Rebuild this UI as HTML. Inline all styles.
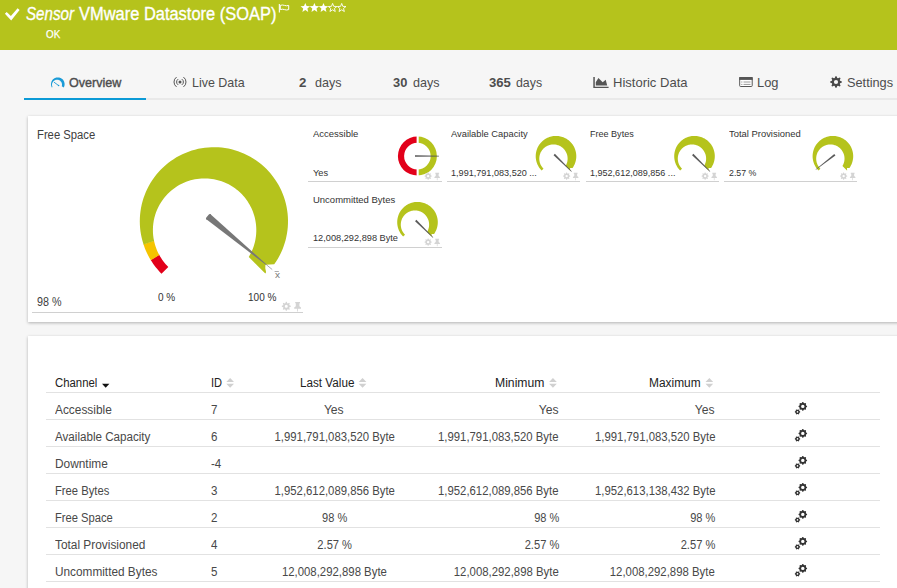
<!DOCTYPE html>
<html><head><meta charset="utf-8"><title>Sensor VMware Datastore (SOAP)</title>
<style>
*{box-sizing:border-box;margin:0;padding:0}
html,body{width:897px;height:588px;overflow:hidden;background:#f6f6f6;font-family:"Liberation Sans",sans-serif;color:#444}
.t{position:absolute;white-space:nowrap;line-height:1;display:block}
#hdr{position:absolute;left:0;top:0;width:897px;height:50px;background:#b5c31c}
#tabline{position:absolute;left:24px;top:98px;width:873px;height:2px;background:#e9e9e9}
#tabsel{position:absolute;left:24px;top:97.5px;width:122px;height:2.5px;background:#0c9ad6}
.card{position:absolute;background:#fff;box-shadow:0 1px 3px rgba(0,0,0,.28)}
.ln{position:absolute;left:46px;width:834px;height:1px;background:#e2e2e2}
.ul{position:absolute;height:1px;background:#d0d0d0}
svg.ov{position:absolute;left:0;top:0}
</style></head><body>
<div id="hdr"></div>
<div id="tabline"></div><div id="tabsel"></div>
<div class="card" style="left:28px;top:116px;width:880px;height:206px"></div>
<div class="card" style="left:28px;top:336px;width:880px;height:270px"></div>
<div class="ln" style="top:392px"></div><div class="ln" style="top:419px"></div><div class="ln" style="top:446px"></div><div class="ln" style="top:473px"></div><div class="ln" style="top:500px"></div><div class="ln" style="top:527px"></div><div class="ln" style="top:554px"></div><div class="ln" style="top:581px"></div>
<div class="ul" style="left:32.0px;top:312px;width:271.0px"></div><div class="ul" style="left:308.0px;top:181px;width:134.0px"></div><div class="ul" style="left:447.0px;top:181px;width:133.0px"></div><div class="ul" style="left:586.0px;top:181px;width:132.5px"></div><div class="ul" style="left:724.0px;top:181px;width:133.0px"></div><div class="ul" style="left:308.0px;top:247px;width:134.0px"></div>
<svg class="ov" width="897" height="588" viewBox="0 0 897 588">
<path fill="#fff" d="M4.9 13.8 L6.7 12 L10.9 16.1 L17.6 8.3 L19.6 10 L11.2 20.4 Z"/><rect x="278.8" y="4" width="1.1" height="8.5" fill="#fff"/><path fill="none" stroke="#fff" stroke-width="1" d="M280.3 5.4 Q282.5 4.6 284.5 5.4 T288.7 5.4 V9.6 Q286.6 10.4 284.5 9.6 T280.3 9.6 Z"/><path fill="#fff" d="M305.30 2.90 L306.59 6.12 L310.06 6.35 L307.39 8.58 L308.24 11.95 L305.30 10.10 L302.36 11.95 L303.21 8.58 L300.54 6.35 L304.01 6.12 Z"/><path fill="#fff" d="M314.40 2.90 L315.69 6.12 L319.16 6.35 L316.49 8.58 L317.34 11.95 L314.40 10.10 L311.46 11.95 L312.31 8.58 L309.64 6.35 L313.11 6.12 Z"/><path fill="#fff" d="M323.50 2.90 L324.79 6.12 L328.26 6.35 L325.59 8.58 L326.44 11.95 L323.50 10.10 L320.56 11.95 L321.41 8.58 L318.74 6.35 L322.21 6.12 Z"/><path fill="none" stroke="#fff" stroke-width="0.9" d="M332.60 3.40 L333.72 6.36 L336.88 6.51 L334.41 8.49 L335.25 11.54 L332.60 9.80 L329.95 11.54 L330.79 8.49 L328.32 6.51 L331.48 6.36 Z"/><path fill="none" stroke="#fff" stroke-width="0.9" d="M341.70 3.40 L342.82 6.36 L345.98 6.51 L343.51 8.49 L344.35 11.54 L341.70 9.80 L339.05 11.54 L339.89 8.49 L337.42 6.51 L340.58 6.36 Z"/><path fill="#1a9bd7" d="M51.80 87.39 L51.50 86.76 L51.27 86.10 L51.11 85.42 L51.02 84.72 L51.00 84.02 L51.06 83.32 L51.18 82.64 L51.38 81.96 L51.64 81.32 L51.97 80.70 L52.36 80.12 L52.81 79.58 L53.31 79.09 L53.86 78.66 L54.45 78.28 L55.08 77.97 L55.73 77.72 L56.41 77.54 L57.10 77.44 L57.80 77.40 L58.50 77.44 L59.19 77.54 L59.87 77.72 L60.52 77.97 L61.15 78.28 L61.74 78.66 L62.29 79.09 L62.79 79.58 L63.24 80.12 L63.63 80.70 L63.96 81.32 L64.22 81.96 L64.42 82.64 L64.54 83.32 L64.60 84.02 L64.58 84.72 L64.49 85.42 L64.33 86.10 L64.10 86.76 L63.80 87.39 L61.74 86.29 L61.87 85.85 L61.95 85.41 L61.99 84.96 L62.00 84.52 L61.96 84.09 L61.89 83.67 L61.79 83.26 L61.65 82.86 L61.48 82.48 L61.28 82.11 L61.05 81.76 L60.79 81.43 L60.50 81.13 L60.18 80.85 L59.84 80.59 L59.48 80.36 L59.09 80.16 L58.68 79.99 L58.25 79.86 L57.80 79.76 L57.34 79.71 L56.86 79.70 L56.38 79.74 L55.89 79.83 L55.40 79.96 L54.92 80.15 L54.46 80.39 L54.01 80.69 L53.59 81.04 L53.21 81.44 L52.87 81.89 L52.57 82.38 L52.33 82.91 L52.15 83.47 L52.04 84.05 L52.00 84.65 L52.03 85.25 L52.13 85.85 L52.31 86.43 L52.55 86.99 Z"/><path d="M53.9 82.1 L58.8 85.7" stroke="#1a9bd7" stroke-width="0.9" fill="none"/><circle cx="58.6" cy="85.5" r="0.8" fill="#1a9bd7"/><circle cx="180" cy="82" r="1.5" fill="#555"/><path fill="none" stroke="#555" stroke-width="1" d="M178.23 79.10 A3.40 3.40 0 0 0 178.23 84.90 M181.77 79.10 A3.40 3.40 0 0 1 181.77 84.90"/><path fill="none" stroke="#555" stroke-width="1" d="M176.54 77.10 A6.00 6.00 0 0 0 176.54 86.90 M183.46 77.10 A6.00 6.00 0 0 1 183.46 86.90"/><path fill="#555" d="M593.3 77 h1.5 v9.8 h13.8 v1.1 h-15.3 Z"/><path fill="#555" d="M595.8 85.6 V82.3 L598.4 77.9 L602.7 82.3 L605.7 79.8 L607.2 85.6 Z"/><rect x="739.7" y="77.5" width="12.5" height="9" rx="0.8" fill="#fff" stroke="#555" stroke-width="1"/><rect x="739.2" y="77" width="13.5" height="2.9" fill="#555"/><path stroke="#9a9a9a" stroke-width="1" d="M743.5 82 h7 M743.5 84.4 h7 M741.2 82 h1.2 M741.2 84.4 h1.2"/><path fill-rule="evenodd" fill="#484848" d="M841.87 81.42 L841.87 82.58 L840.11 83.25 L839.79 84.03 L840.56 85.74 L839.74 86.56 L838.03 85.79 L837.25 86.11 L836.58 87.87 L835.42 87.87 L834.75 86.11 L833.97 85.79 L832.26 86.56 L831.44 85.74 L832.21 84.03 L831.89 83.25 L830.13 82.58 L830.13 81.42 L831.89 80.75 L832.21 79.97 L831.44 78.26 L832.26 77.44 L833.97 78.21 L834.75 77.89 L835.42 76.13 L836.58 76.13 L837.25 77.89 L838.03 78.21 L839.74 77.44 L840.56 78.26 L839.79 79.97 L840.11 80.75 Z M833.90 82.00 a2.10 2.10 0 1 0 4.20 0 a2.10 2.10 0 1 0 -4.20 0 Z"/>
<path fill="#e2001a" d="M161.50 273.70 L159.98 272.13 L158.51 270.52 L157.08 268.87 L155.71 267.17 L154.38 265.44 L153.11 263.67 L151.89 261.86 L150.72 260.02 L159.19 254.82 L160.13 256.47 L161.13 258.08 L162.18 259.66 L163.29 261.19 L164.46 262.69 L165.69 264.14 L166.96 265.55 L168.29 266.91 Z"/><path fill="#f5c400" d="M150.92 260.35 L149.78 258.43 L148.69 256.49 L147.66 254.51 L146.69 252.50 L145.78 250.46 L144.93 248.40 L144.15 246.31 L143.43 244.20 L154.01 240.76 L154.44 242.62 L154.94 244.47 L155.50 246.30 L156.14 248.11 L156.84 249.90 L157.61 251.67 L158.45 253.41 L159.36 255.12 Z"/><path fill="#b5c31c" d="M143.55 244.57 L142.57 241.35 L141.73 238.10 L141.04 234.81 L140.50 231.50 L140.12 228.16 L139.88 224.81 L139.80 221.45 L139.87 218.09 L140.09 214.74 L140.46 211.40 L140.99 208.08 L141.66 204.79 L142.49 201.53 L143.45 198.32 L144.57 195.15 L145.82 192.03 L147.22 188.98 L148.75 185.99 L150.42 183.07 L152.22 180.23 L154.15 177.48 L156.19 174.82 L158.36 172.25 L160.64 169.78 L163.03 167.42 L165.52 165.17 L168.12 163.04 L170.80 161.02 L173.58 159.13 L176.44 157.37 L179.38 155.73 L182.38 154.24 L185.46 152.88 L188.59 151.66 L191.77 150.58 L195.00 149.65 L198.26 148.87 L201.56 148.23 L204.89 147.75 L208.23 147.42 L211.58 147.24 L214.94 147.21 L218.30 147.33 L221.65 147.61 L224.98 148.03 L228.29 148.61 L231.57 149.34 L234.81 150.21 L238.01 151.23 L241.16 152.40 L244.26 153.70 L247.29 155.15 L250.26 156.73 L253.15 158.45 L255.95 160.29 L258.68 162.26 L261.31 164.35 L263.84 166.56 L266.27 168.87 L268.59 171.30 L270.80 173.83 L272.89 176.46 L274.87 179.18 L276.71 181.99 L278.43 184.87 L280.01 187.84 L281.46 190.87 L282.77 193.96 L283.94 197.11 L284.96 200.31 L285.84 203.55 L286.57 206.83 L287.15 210.14 L287.59 213.47 L287.86 216.82 L287.99 220.18 L287.97 223.54 L287.79 226.89 L287.46 230.23 L286.98 233.56 L286.35 236.86 L285.57 240.13 L284.64 243.35 L283.57 246.54 L282.35 249.67 L281.00 252.74 L279.50 255.75 L277.87 258.69 L276.11 261.55 L274.23 264.33 L265.39 264.63 L265.29 268.30 L266.10 272.36 L265.31 273.55 L248.79 256.93 L250.00 254.84 L251.10 252.71 L252.08 250.56 L252.95 248.40 L253.72 246.23 L254.38 244.05 L254.94 241.88 L255.40 239.71 L255.76 237.55 L256.03 235.40 L256.20 233.26 L256.29 231.15 L256.29 229.06 L256.21 226.99 L256.04 224.95 L255.80 222.94 L255.48 220.96 L255.10 219.01 L254.64 217.10 L254.11 215.22 L253.52 213.38 L252.86 211.57 L252.15 209.80 L251.37 208.07 L250.54 206.39 L249.65 204.74 L248.70 203.13 L247.71 201.56 L246.66 200.04 L245.56 198.55 L244.41 197.11 L243.21 195.72 L241.96 194.36 L240.66 193.06 L239.32 191.80 L237.93 190.58 L236.50 189.42 L235.02 188.30 L233.50 187.23 L231.93 186.22 L230.32 185.25 L228.67 184.35 L226.97 183.49 L225.23 182.70 L223.45 181.96 L221.63 181.29 L219.78 180.68 L217.88 180.14 L215.94 179.66 L213.97 179.26 L211.97 178.93 L209.93 178.68 L207.86 178.51 L205.77 178.42 L203.64 178.41 L201.50 178.50 L199.33 178.67 L197.15 178.94 L194.95 179.31 L192.75 179.78 L190.54 180.35 L188.33 181.03 L186.12 181.82 L183.93 182.72 L181.75 183.73 L179.60 184.85 L177.48 186.09 L175.39 187.45 L173.35 188.92 L171.36 190.51 L169.43 192.21 L167.57 194.03 L165.78 195.96 L164.07 198.00 L162.46 200.15 L160.95 202.40 L159.54 204.75 L158.25 207.20 L157.08 209.73 L156.05 212.34 L155.15 215.03 L154.39 217.79 L153.78 220.60 L153.33 223.46 L153.04 226.36 L152.91 229.29 L152.94 232.23 L153.15 235.19 L153.53 238.14 L154.08 241.08 Z"/><path d="M206.02 219.06 L266.15 264.98 L266.60 264.44 L210.22 213.98 Z" fill="#777"/><line x1="207.31" y1="218.44" x2="209.86" y2="215.36" stroke="#777" stroke-width="2.60" stroke-linecap="round"/><line x1="266.37" y1="264.71" x2="272.23" y2="269.55" stroke="#888" stroke-width="0.7"/><path fill="#b5c31c" d="M541.65 170.55 L540.94 169.81 L540.27 169.03 L539.64 168.22 L539.06 167.38 L538.51 166.51 L538.02 165.62 L537.56 164.70 L537.16 163.75 L536.80 162.79 L536.49 161.81 L536.23 160.82 L536.03 159.82 L535.87 158.80 L535.76 157.78 L535.71 156.76 L535.71 155.74 L535.75 154.71 L535.86 153.69 L536.01 152.68 L536.21 151.67 L536.47 150.68 L536.77 149.70 L537.12 148.74 L537.52 147.79 L537.97 146.87 L538.47 145.97 L539.00 145.10 L539.59 144.26 L540.21 143.44 L540.87 142.66 L541.58 141.91 L542.32 141.20 L543.09 140.53 L543.90 139.90 L544.74 139.31 L545.61 138.76 L546.50 138.26 L547.42 137.80 L548.36 137.39 L549.32 137.03 L550.29 136.72 L551.28 136.46 L552.29 136.24 L553.30 136.08 L554.32 135.97 L555.34 135.91 L556.37 135.90 L557.39 135.95 L558.41 136.04 L559.43 136.19 L560.43 136.39 L561.43 136.64 L562.41 136.94 L563.37 137.29 L564.32 137.68 L565.24 138.13 L566.14 138.62 L567.02 139.15 L567.87 139.73 L568.68 140.35 L569.47 141.01 L570.22 141.71 L570.93 142.45 L571.61 143.22 L572.24 144.02 L572.84 144.86 L573.39 145.72 L573.89 146.61 L574.36 147.53 L574.77 148.47 L575.14 149.43 L575.45 150.40 L575.72 151.39 L575.94 152.39 L576.11 153.40 L576.22 154.42 L576.29 155.45 L576.30 156.47 L576.26 157.50 L576.17 158.52 L576.02 159.53 L575.83 160.54 L575.59 161.54 L575.29 162.52 L574.95 163.48 L574.56 164.43 L574.12 165.36 L573.63 166.26 L573.10 167.14 L572.53 167.99 L570.10 168.07 L570.08 169.08 L570.30 170.19 L570.08 170.51 L565.56 165.96 L565.92 165.32 L566.25 164.68 L566.54 164.02 L566.79 163.36 L567.01 162.70 L567.19 162.04 L567.34 161.38 L567.46 160.72 L567.54 160.07 L567.59 159.42 L567.61 158.78 L567.61 158.15 L567.57 157.52 L567.51 156.91 L567.43 156.30 L567.31 155.70 L567.18 155.12 L567.02 154.55 L566.84 153.99 L566.64 153.44 L566.42 152.91 L566.17 152.39 L565.91 151.88 L565.63 151.38 L565.33 150.90 L565.02 150.44 L564.69 149.99 L564.34 149.55 L563.97 149.13 L563.59 148.72 L563.19 148.33 L562.77 147.95 L562.34 147.59 L561.90 147.24 L561.44 146.92 L560.97 146.61 L560.48 146.31 L559.97 146.04 L559.45 145.78 L558.92 145.55 L558.38 145.33 L557.82 145.14 L557.24 144.97 L556.66 144.82 L556.06 144.69 L555.45 144.59 L554.83 144.52 L554.20 144.47 L553.56 144.45 L552.91 144.46 L552.26 144.50 L551.59 144.57 L550.93 144.68 L550.26 144.81 L549.59 144.99 L548.91 145.19 L548.25 145.44 L547.58 145.72 L546.92 146.04 L546.27 146.40 L545.63 146.80 L545.01 147.24 L544.40 147.72 L543.81 148.23 L543.25 148.79 L542.71 149.38 L542.20 150.01 L541.72 150.68 L541.28 151.38 L540.87 152.11 L540.50 152.87 L540.18 153.66 L539.91 154.48 L539.68 155.31 L539.50 156.17 L539.38 157.04 L539.31 157.93 L539.29 158.82 L539.33 159.72 L539.43 160.62 L539.59 161.51 L539.80 162.40 L540.08 163.27 L540.41 164.13 L540.79 164.97 L541.24 165.78 L541.73 166.56 L542.27 167.31 L542.87 168.02 L543.51 168.69 Z"/><path d="M553.55 155.13 L571.37 171.66 L571.72 171.30 L554.88 153.77 Z" fill="#5a5a5a"/><path fill="#b5c31c" d="M680.15 170.55 L679.44 169.81 L678.77 169.03 L678.14 168.22 L677.56 167.38 L677.01 166.51 L676.52 165.62 L676.06 164.70 L675.66 163.75 L675.30 162.79 L674.99 161.81 L674.73 160.82 L674.53 159.82 L674.37 158.80 L674.26 157.78 L674.21 156.76 L674.21 155.74 L674.25 154.71 L674.36 153.69 L674.51 152.68 L674.71 151.67 L674.97 150.68 L675.27 149.70 L675.62 148.74 L676.02 147.79 L676.47 146.87 L676.97 145.97 L677.50 145.10 L678.09 144.26 L678.71 143.44 L679.37 142.66 L680.08 141.91 L680.82 141.20 L681.59 140.53 L682.40 139.90 L683.24 139.31 L684.11 138.76 L685.00 138.26 L685.92 137.80 L686.86 137.39 L687.82 137.03 L688.79 136.72 L689.78 136.46 L690.79 136.24 L691.80 136.08 L692.82 135.97 L693.84 135.91 L694.87 135.90 L695.89 135.95 L696.91 136.04 L697.93 136.19 L698.93 136.39 L699.93 136.64 L700.91 136.94 L701.87 137.29 L702.82 137.68 L703.74 138.13 L704.64 138.62 L705.52 139.15 L706.37 139.73 L707.18 140.35 L707.97 141.01 L708.72 141.71 L709.43 142.45 L710.11 143.22 L710.74 144.02 L711.34 144.86 L711.89 145.72 L712.39 146.61 L712.86 147.53 L713.27 148.47 L713.64 149.43 L713.95 150.40 L714.22 151.39 L714.44 152.39 L714.61 153.40 L714.72 154.42 L714.79 155.45 L714.80 156.47 L714.76 157.50 L714.67 158.52 L714.52 159.53 L714.33 160.54 L714.09 161.54 L713.79 162.52 L713.45 163.48 L713.06 164.43 L712.62 165.36 L712.13 166.26 L711.60 167.14 L711.03 167.99 L708.60 168.07 L708.58 169.08 L708.80 170.19 L708.58 170.51 L704.06 165.96 L704.42 165.32 L704.75 164.68 L705.04 164.02 L705.29 163.36 L705.51 162.70 L705.69 162.04 L705.84 161.38 L705.96 160.72 L706.04 160.07 L706.09 159.42 L706.11 158.78 L706.11 158.15 L706.07 157.52 L706.01 156.91 L705.93 156.30 L705.81 155.70 L705.68 155.12 L705.52 154.55 L705.34 153.99 L705.14 153.44 L704.92 152.91 L704.67 152.39 L704.41 151.88 L704.13 151.38 L703.83 150.90 L703.52 150.44 L703.19 149.99 L702.84 149.55 L702.47 149.13 L702.09 148.72 L701.69 148.33 L701.27 147.95 L700.84 147.59 L700.40 147.24 L699.94 146.92 L699.47 146.61 L698.98 146.31 L698.47 146.04 L697.95 145.78 L697.42 145.55 L696.88 145.33 L696.32 145.14 L695.74 144.97 L695.16 144.82 L694.56 144.69 L693.95 144.59 L693.33 144.52 L692.70 144.47 L692.06 144.45 L691.41 144.46 L690.76 144.50 L690.09 144.57 L689.43 144.68 L688.76 144.81 L688.09 144.99 L687.41 145.19 L686.75 145.44 L686.08 145.72 L685.42 146.04 L684.77 146.40 L684.13 146.80 L683.51 147.24 L682.90 147.72 L682.31 148.23 L681.75 148.79 L681.21 149.38 L680.70 150.01 L680.22 150.68 L679.78 151.38 L679.37 152.11 L679.00 152.87 L678.68 153.66 L678.41 154.48 L678.18 155.31 L678.00 156.17 L677.88 157.04 L677.81 157.93 L677.79 158.82 L677.83 159.72 L677.93 160.62 L678.09 161.51 L678.30 162.40 L678.58 163.27 L678.91 164.13 L679.29 164.97 L679.74 165.78 L680.23 166.56 L680.77 167.31 L681.37 168.02 L682.01 168.69 Z"/><path d="M692.05 155.13 L709.87 171.66 L710.22 171.30 L693.38 153.77 Z" fill="#5a5a5a"/><path fill="#b5c31c" d="M818.55 170.55 L817.84 169.81 L817.17 169.03 L816.54 168.22 L815.96 167.38 L815.41 166.51 L814.92 165.62 L814.46 164.70 L814.06 163.75 L813.70 162.79 L813.39 161.81 L813.13 160.82 L812.93 159.82 L812.77 158.80 L812.66 157.78 L812.61 156.76 L812.61 155.74 L812.65 154.71 L812.76 153.69 L812.91 152.68 L813.11 151.67 L813.37 150.68 L813.67 149.70 L814.02 148.74 L814.42 147.79 L814.87 146.87 L815.37 145.97 L815.90 145.10 L816.49 144.26 L817.11 143.44 L817.77 142.66 L818.48 141.91 L819.22 141.20 L819.99 140.53 L820.80 139.90 L821.64 139.31 L822.51 138.76 L823.40 138.26 L824.32 137.80 L825.26 137.39 L826.22 137.03 L827.19 136.72 L828.18 136.46 L829.19 136.24 L830.20 136.08 L831.22 135.97 L832.24 135.91 L833.27 135.90 L834.29 135.95 L835.31 136.04 L836.33 136.19 L837.33 136.39 L838.33 136.64 L839.31 136.94 L840.27 137.29 L841.22 137.68 L842.14 138.13 L843.04 138.62 L843.92 139.15 L844.77 139.73 L845.58 140.35 L846.37 141.01 L847.12 141.71 L847.83 142.45 L848.51 143.22 L849.14 144.02 L849.74 144.86 L850.29 145.72 L850.79 146.61 L851.26 147.53 L851.67 148.47 L852.04 149.43 L852.35 150.40 L852.62 151.39 L852.84 152.39 L853.01 153.40 L853.12 154.42 L853.19 155.45 L853.20 156.47 L853.16 157.50 L853.07 158.52 L852.92 159.53 L852.73 160.54 L852.49 161.54 L852.19 162.52 L851.85 163.48 L851.46 164.43 L851.02 165.36 L850.53 166.26 L850.00 167.14 L849.43 167.99 L847.00 168.07 L846.98 169.08 L847.20 170.19 L846.98 170.51 L842.46 165.96 L842.82 165.32 L843.15 164.68 L843.44 164.02 L843.69 163.36 L843.91 162.70 L844.09 162.04 L844.24 161.38 L844.36 160.72 L844.44 160.07 L844.49 159.42 L844.51 158.78 L844.51 158.15 L844.47 157.52 L844.41 156.91 L844.33 156.30 L844.21 155.70 L844.08 155.12 L843.92 154.55 L843.74 153.99 L843.54 153.44 L843.32 152.91 L843.07 152.39 L842.81 151.88 L842.53 151.38 L842.23 150.90 L841.92 150.44 L841.59 149.99 L841.24 149.55 L840.87 149.13 L840.49 148.72 L840.09 148.33 L839.67 147.95 L839.24 147.59 L838.80 147.24 L838.34 146.92 L837.87 146.61 L837.38 146.31 L836.87 146.04 L836.35 145.78 L835.82 145.55 L835.28 145.33 L834.72 145.14 L834.14 144.97 L833.56 144.82 L832.96 144.69 L832.35 144.59 L831.73 144.52 L831.10 144.47 L830.46 144.45 L829.81 144.46 L829.16 144.50 L828.49 144.57 L827.83 144.68 L827.16 144.81 L826.49 144.99 L825.81 145.19 L825.15 145.44 L824.48 145.72 L823.82 146.04 L823.17 146.40 L822.53 146.80 L821.91 147.24 L821.30 147.72 L820.71 148.23 L820.15 148.79 L819.61 149.38 L819.10 150.01 L818.62 150.68 L818.18 151.38 L817.77 152.11 L817.40 152.87 L817.08 153.66 L816.81 154.48 L816.58 155.31 L816.40 156.17 L816.28 157.04 L816.21 157.93 L816.19 158.82 L816.23 159.72 L816.33 160.62 L816.49 161.51 L816.70 162.40 L816.98 163.27 L817.31 164.13 L817.69 164.97 L818.14 165.78 L818.63 166.56 L819.17 167.31 L819.77 168.02 L820.41 168.69 Z"/><path d="M834.28 153.91 L815.58 169.44 L815.89 169.84 L835.45 155.41 Z" fill="#5a5a5a"/><path fill="#b5c31c" d="M403.15 236.55 L402.44 235.81 L401.77 235.03 L401.14 234.22 L400.56 233.38 L400.01 232.51 L399.52 231.62 L399.06 230.70 L398.66 229.75 L398.30 228.79 L397.99 227.81 L397.73 226.82 L397.53 225.82 L397.37 224.80 L397.26 223.78 L397.21 222.76 L397.21 221.74 L397.25 220.71 L397.36 219.69 L397.51 218.68 L397.71 217.67 L397.97 216.68 L398.27 215.70 L398.62 214.74 L399.02 213.79 L399.47 212.87 L399.97 211.97 L400.50 211.10 L401.09 210.26 L401.71 209.44 L402.37 208.66 L403.08 207.91 L403.82 207.20 L404.59 206.53 L405.40 205.90 L406.24 205.31 L407.11 204.76 L408.00 204.26 L408.92 203.80 L409.86 203.39 L410.82 203.03 L411.79 202.72 L412.78 202.46 L413.79 202.24 L414.80 202.08 L415.82 201.97 L416.84 201.91 L417.87 201.90 L418.89 201.95 L419.91 202.04 L420.93 202.19 L421.93 202.39 L422.93 202.64 L423.91 202.94 L424.87 203.29 L425.82 203.68 L426.74 204.13 L427.64 204.62 L428.52 205.15 L429.37 205.73 L430.18 206.35 L430.97 207.01 L431.72 207.71 L432.43 208.45 L433.11 209.22 L433.74 210.02 L434.34 210.86 L434.89 211.72 L435.39 212.61 L435.86 213.53 L436.27 214.47 L436.64 215.43 L436.95 216.40 L437.22 217.39 L437.44 218.39 L437.61 219.40 L437.72 220.42 L437.79 221.45 L437.80 222.47 L437.76 223.50 L437.67 224.52 L437.52 225.53 L437.33 226.54 L437.09 227.54 L436.79 228.52 L436.45 229.48 L436.06 230.43 L435.62 231.36 L435.13 232.26 L434.60 233.14 L434.03 233.99 L431.60 234.07 L431.58 235.08 L431.80 236.19 L431.58 236.51 L427.06 231.96 L427.42 231.32 L427.75 230.68 L428.04 230.02 L428.29 229.36 L428.51 228.70 L428.69 228.04 L428.84 227.38 L428.96 226.72 L429.04 226.07 L429.09 225.42 L429.11 224.78 L429.11 224.15 L429.07 223.52 L429.01 222.91 L428.93 222.30 L428.81 221.70 L428.68 221.12 L428.52 220.55 L428.34 219.99 L428.14 219.44 L427.92 218.91 L427.67 218.39 L427.41 217.88 L427.13 217.38 L426.83 216.90 L426.52 216.44 L426.19 215.99 L425.84 215.55 L425.47 215.13 L425.09 214.72 L424.69 214.33 L424.27 213.95 L423.84 213.59 L423.40 213.24 L422.94 212.92 L422.47 212.61 L421.98 212.31 L421.47 212.04 L420.95 211.78 L420.42 211.55 L419.88 211.33 L419.32 211.14 L418.74 210.97 L418.16 210.82 L417.56 210.69 L416.95 210.59 L416.33 210.52 L415.70 210.47 L415.06 210.45 L414.41 210.46 L413.76 210.50 L413.09 210.57 L412.43 210.68 L411.76 210.81 L411.09 210.99 L410.41 211.19 L409.75 211.44 L409.08 211.72 L408.42 212.04 L407.77 212.40 L407.13 212.80 L406.51 213.24 L405.90 213.72 L405.31 214.23 L404.75 214.79 L404.21 215.38 L403.70 216.01 L403.22 216.68 L402.78 217.38 L402.37 218.11 L402.00 218.87 L401.68 219.66 L401.41 220.48 L401.18 221.31 L401.00 222.17 L400.88 223.04 L400.81 223.93 L400.79 224.82 L400.83 225.72 L400.93 226.62 L401.09 227.51 L401.30 228.40 L401.58 229.27 L401.91 230.13 L402.29 230.97 L402.74 231.78 L403.23 232.56 L403.77 233.31 L404.37 234.02 L405.01 234.69 Z"/><path d="M415.05 221.13 L432.87 237.66 L433.22 237.30 L416.38 219.77 Z" fill="#5a5a5a"/><path fill="#e2001a" d="M417.40 175.60 A19.5 19.5 0 0 1 417.40 136.60 L417.40 142.80 A13.3 13.3 0 0 0 417.40 169.40 Z"/><path fill="#b5c31c" d="M417.40 136.60 A19.5 19.5 0 0 1 417.40 175.60 L417.40 169.40 A13.3 13.3 0 0 0 417.40 142.80 Z"/><rect x="416.6" y="135" width="2.1" height="42" fill="#fff"/><path d="M415.0 155.35 L438.9 155.75 L438.9 156.45 L415.0 156.85 Z" fill="#555"/><rect x="274.6" y="271" width="4.2" height="0.7" fill="#888"/>
<path fill-rule="evenodd" fill="#d4d4d4" d="M290.78 305.86 L290.78 306.74 L289.46 307.26 L289.21 307.86 L289.78 309.15 L289.15 309.78 L287.86 309.21 L287.26 309.46 L286.74 310.78 L285.86 310.78 L285.34 309.46 L284.74 309.21 L283.45 309.78 L282.82 309.15 L283.39 307.86 L283.14 307.26 L281.82 306.74 L281.82 305.86 L283.14 305.34 L283.39 304.74 L282.82 303.45 L283.45 302.82 L284.74 303.39 L285.34 303.14 L285.86 301.82 L286.74 301.82 L287.26 303.14 L287.86 303.39 L289.15 302.82 L289.78 303.45 L289.21 304.74 L289.46 305.34 Z M284.80 306.30 a1.50 1.50 0 1 0 3.00 0 a1.50 1.50 0 1 0 -3.00 0 Z"/><path fill="#d4d4d4" d="M295.20 302.00 h4.8 v1.3 h-0.6 v3.0 l1.6 1.2 v1.3 h-3.0 v2.8 h-0.8 v-2.8 h-3.0 v-1.3 l1.6 -1.2 v-3.0 h-0.6 Z"/><g transform="translate(424.7 172.9) scale(0.8)"><path fill-rule="evenodd" fill="#d4d4d4" d="M8.78 3.56 L8.78 4.44 L7.46 4.96 L7.21 5.56 L7.78 6.85 L7.15 7.48 L5.86 6.91 L5.26 7.16 L4.74 8.48 L3.86 8.48 L3.34 7.16 L2.74 6.91 L1.45 7.48 L0.82 6.85 L1.39 5.56 L1.14 4.96 L-0.18 4.44 L-0.18 3.56 L1.14 3.04 L1.39 2.44 L0.82 1.15 L1.45 0.52 L2.74 1.09 L3.34 0.84 L3.86 -0.48 L4.74 -0.48 L5.26 0.84 L5.86 1.09 L7.15 0.52 L7.78 1.15 L7.21 2.44 L7.46 3.04 Z M2.80 4.00 a1.50 1.50 0 1 0 3.00 0 a1.50 1.50 0 1 0 -3.00 0 Z"/><path fill="#d4d4d4" d="M13.20 -0.30 h4.8 v1.3 h-0.6 v3.0 l1.6 1.2 v1.3 h-3.0 v2.8 h-0.8 v-2.8 h-3.0 v-1.3 l1.6 -1.2 v-3.0 h-0.6 Z"/></g><g transform="translate(563.2 172.9) scale(0.8)"><path fill-rule="evenodd" fill="#d4d4d4" d="M8.78 3.56 L8.78 4.44 L7.46 4.96 L7.21 5.56 L7.78 6.85 L7.15 7.48 L5.86 6.91 L5.26 7.16 L4.74 8.48 L3.86 8.48 L3.34 7.16 L2.74 6.91 L1.45 7.48 L0.82 6.85 L1.39 5.56 L1.14 4.96 L-0.18 4.44 L-0.18 3.56 L1.14 3.04 L1.39 2.44 L0.82 1.15 L1.45 0.52 L2.74 1.09 L3.34 0.84 L3.86 -0.48 L4.74 -0.48 L5.26 0.84 L5.86 1.09 L7.15 0.52 L7.78 1.15 L7.21 2.44 L7.46 3.04 Z M2.80 4.00 a1.50 1.50 0 1 0 3.00 0 a1.50 1.50 0 1 0 -3.00 0 Z"/><path fill="#d4d4d4" d="M13.20 -0.30 h4.8 v1.3 h-0.6 v3.0 l1.6 1.2 v1.3 h-3.0 v2.8 h-0.8 v-2.8 h-3.0 v-1.3 l1.6 -1.2 v-3.0 h-0.6 Z"/></g><g transform="translate(701.7 172.9) scale(0.8)"><path fill-rule="evenodd" fill="#d4d4d4" d="M8.78 3.56 L8.78 4.44 L7.46 4.96 L7.21 5.56 L7.78 6.85 L7.15 7.48 L5.86 6.91 L5.26 7.16 L4.74 8.48 L3.86 8.48 L3.34 7.16 L2.74 6.91 L1.45 7.48 L0.82 6.85 L1.39 5.56 L1.14 4.96 L-0.18 4.44 L-0.18 3.56 L1.14 3.04 L1.39 2.44 L0.82 1.15 L1.45 0.52 L2.74 1.09 L3.34 0.84 L3.86 -0.48 L4.74 -0.48 L5.26 0.84 L5.86 1.09 L7.15 0.52 L7.78 1.15 L7.21 2.44 L7.46 3.04 Z M2.80 4.00 a1.50 1.50 0 1 0 3.00 0 a1.50 1.50 0 1 0 -3.00 0 Z"/><path fill="#d4d4d4" d="M13.20 -0.30 h4.8 v1.3 h-0.6 v3.0 l1.6 1.2 v1.3 h-3.0 v2.8 h-0.8 v-2.8 h-3.0 v-1.3 l1.6 -1.2 v-3.0 h-0.6 Z"/></g><g transform="translate(840.2 172.9) scale(0.8)"><path fill-rule="evenodd" fill="#d4d4d4" d="M8.78 3.56 L8.78 4.44 L7.46 4.96 L7.21 5.56 L7.78 6.85 L7.15 7.48 L5.86 6.91 L5.26 7.16 L4.74 8.48 L3.86 8.48 L3.34 7.16 L2.74 6.91 L1.45 7.48 L0.82 6.85 L1.39 5.56 L1.14 4.96 L-0.18 4.44 L-0.18 3.56 L1.14 3.04 L1.39 2.44 L0.82 1.15 L1.45 0.52 L2.74 1.09 L3.34 0.84 L3.86 -0.48 L4.74 -0.48 L5.26 0.84 L5.86 1.09 L7.15 0.52 L7.78 1.15 L7.21 2.44 L7.46 3.04 Z M2.80 4.00 a1.50 1.50 0 1 0 3.00 0 a1.50 1.50 0 1 0 -3.00 0 Z"/><path fill="#d4d4d4" d="M13.20 -0.30 h4.8 v1.3 h-0.6 v3.0 l1.6 1.2 v1.3 h-3.0 v2.8 h-0.8 v-2.8 h-3.0 v-1.3 l1.6 -1.2 v-3.0 h-0.6 Z"/></g><g transform="translate(424.7 238.9) scale(0.8)"><path fill-rule="evenodd" fill="#d4d4d4" d="M8.78 3.56 L8.78 4.44 L7.46 4.96 L7.21 5.56 L7.78 6.85 L7.15 7.48 L5.86 6.91 L5.26 7.16 L4.74 8.48 L3.86 8.48 L3.34 7.16 L2.74 6.91 L1.45 7.48 L0.82 6.85 L1.39 5.56 L1.14 4.96 L-0.18 4.44 L-0.18 3.56 L1.14 3.04 L1.39 2.44 L0.82 1.15 L1.45 0.52 L2.74 1.09 L3.34 0.84 L3.86 -0.48 L4.74 -0.48 L5.26 0.84 L5.86 1.09 L7.15 0.52 L7.78 1.15 L7.21 2.44 L7.46 3.04 Z M2.80 4.00 a1.50 1.50 0 1 0 3.00 0 a1.50 1.50 0 1 0 -3.00 0 Z"/><path fill="#d4d4d4" d="M13.20 -0.30 h4.8 v1.3 h-0.6 v3.0 l1.6 1.2 v1.3 h-3.0 v2.8 h-0.8 v-2.8 h-3.0 v-1.3 l1.6 -1.2 v-3.0 h-0.6 Z"/></g>
<path fill-rule="evenodd" fill="#333" d="M807.08 405.98 L807.08 406.82 L806.15 407.42 L805.89 408.05 L806.12 409.13 L805.53 409.72 L804.45 409.49 L803.82 409.75 L803.22 410.68 L802.38 410.68 L801.78 409.75 L801.15 409.49 L800.07 409.72 L799.48 409.13 L799.71 408.05 L799.45 407.42 L798.52 406.82 L798.52 405.98 L799.45 405.38 L799.71 404.75 L799.48 403.67 L800.07 403.08 L801.15 403.31 L801.78 403.05 L802.38 402.12 L803.22 402.12 L803.82 403.05 L804.45 403.31 L805.53 403.08 L806.12 403.67 L805.89 404.75 L806.15 405.38 Z M801.10 406.40 a1.70 1.70 0 1 0 3.40 0 a1.70 1.70 0 1 0 -3.40 0 Z"/><path fill-rule="evenodd" fill="#333" d="M800.18 411.55 L800.18 412.25 L799.44 412.70 L799.17 413.18 L799.14 414.04 L798.53 414.39 L797.77 413.98 L797.23 413.98 L796.47 414.39 L795.86 414.04 L795.83 413.18 L795.56 412.70 L794.82 412.25 L794.82 411.55 L795.56 411.10 L795.83 410.62 L795.86 409.76 L796.47 409.41 L797.23 409.82 L797.77 409.82 L798.53 409.41 L799.14 409.76 L799.17 410.62 L799.44 411.10 Z M796.70 411.90 a0.80 0.80 0 1 0 1.60 0 a0.80 0.80 0 1 0 -1.60 0 Z"/><path fill-rule="evenodd" fill="#333" d="M807.08 432.98 L807.08 433.82 L806.15 434.42 L805.89 435.05 L806.12 436.13 L805.53 436.72 L804.45 436.49 L803.82 436.75 L803.22 437.68 L802.38 437.68 L801.78 436.75 L801.15 436.49 L800.07 436.72 L799.48 436.13 L799.71 435.05 L799.45 434.42 L798.52 433.82 L798.52 432.98 L799.45 432.38 L799.71 431.75 L799.48 430.67 L800.07 430.08 L801.15 430.31 L801.78 430.05 L802.38 429.12 L803.22 429.12 L803.82 430.05 L804.45 430.31 L805.53 430.08 L806.12 430.67 L805.89 431.75 L806.15 432.38 Z M801.10 433.40 a1.70 1.70 0 1 0 3.40 0 a1.70 1.70 0 1 0 -3.40 0 Z"/><path fill-rule="evenodd" fill="#333" d="M800.18 438.55 L800.18 439.25 L799.44 439.70 L799.17 440.18 L799.14 441.04 L798.53 441.39 L797.77 440.98 L797.23 440.98 L796.47 441.39 L795.86 441.04 L795.83 440.18 L795.56 439.70 L794.82 439.25 L794.82 438.55 L795.56 438.10 L795.83 437.62 L795.86 436.76 L796.47 436.41 L797.23 436.82 L797.77 436.82 L798.53 436.41 L799.14 436.76 L799.17 437.62 L799.44 438.10 Z M796.70 438.90 a0.80 0.80 0 1 0 1.60 0 a0.80 0.80 0 1 0 -1.60 0 Z"/><path fill-rule="evenodd" fill="#333" d="M807.08 459.98 L807.08 460.82 L806.15 461.42 L805.89 462.05 L806.12 463.13 L805.53 463.72 L804.45 463.49 L803.82 463.75 L803.22 464.68 L802.38 464.68 L801.78 463.75 L801.15 463.49 L800.07 463.72 L799.48 463.13 L799.71 462.05 L799.45 461.42 L798.52 460.82 L798.52 459.98 L799.45 459.38 L799.71 458.75 L799.48 457.67 L800.07 457.08 L801.15 457.31 L801.78 457.05 L802.38 456.12 L803.22 456.12 L803.82 457.05 L804.45 457.31 L805.53 457.08 L806.12 457.67 L805.89 458.75 L806.15 459.38 Z M801.10 460.40 a1.70 1.70 0 1 0 3.40 0 a1.70 1.70 0 1 0 -3.40 0 Z"/><path fill-rule="evenodd" fill="#333" d="M800.18 465.55 L800.18 466.25 L799.44 466.70 L799.17 467.18 L799.14 468.04 L798.53 468.39 L797.77 467.98 L797.23 467.98 L796.47 468.39 L795.86 468.04 L795.83 467.18 L795.56 466.70 L794.82 466.25 L794.82 465.55 L795.56 465.10 L795.83 464.62 L795.86 463.76 L796.47 463.41 L797.23 463.82 L797.77 463.82 L798.53 463.41 L799.14 463.76 L799.17 464.62 L799.44 465.10 Z M796.70 465.90 a0.80 0.80 0 1 0 1.60 0 a0.80 0.80 0 1 0 -1.60 0 Z"/><path fill-rule="evenodd" fill="#333" d="M807.08 486.98 L807.08 487.82 L806.15 488.42 L805.89 489.05 L806.12 490.13 L805.53 490.72 L804.45 490.49 L803.82 490.75 L803.22 491.68 L802.38 491.68 L801.78 490.75 L801.15 490.49 L800.07 490.72 L799.48 490.13 L799.71 489.05 L799.45 488.42 L798.52 487.82 L798.52 486.98 L799.45 486.38 L799.71 485.75 L799.48 484.67 L800.07 484.08 L801.15 484.31 L801.78 484.05 L802.38 483.12 L803.22 483.12 L803.82 484.05 L804.45 484.31 L805.53 484.08 L806.12 484.67 L805.89 485.75 L806.15 486.38 Z M801.10 487.40 a1.70 1.70 0 1 0 3.40 0 a1.70 1.70 0 1 0 -3.40 0 Z"/><path fill-rule="evenodd" fill="#333" d="M800.18 492.55 L800.18 493.25 L799.44 493.70 L799.17 494.18 L799.14 495.04 L798.53 495.39 L797.77 494.98 L797.23 494.98 L796.47 495.39 L795.86 495.04 L795.83 494.18 L795.56 493.70 L794.82 493.25 L794.82 492.55 L795.56 492.10 L795.83 491.62 L795.86 490.76 L796.47 490.41 L797.23 490.82 L797.77 490.82 L798.53 490.41 L799.14 490.76 L799.17 491.62 L799.44 492.10 Z M796.70 492.90 a0.80 0.80 0 1 0 1.60 0 a0.80 0.80 0 1 0 -1.60 0 Z"/><path fill-rule="evenodd" fill="#333" d="M807.08 513.98 L807.08 514.82 L806.15 515.42 L805.89 516.05 L806.12 517.13 L805.53 517.72 L804.45 517.49 L803.82 517.75 L803.22 518.68 L802.38 518.68 L801.78 517.75 L801.15 517.49 L800.07 517.72 L799.48 517.13 L799.71 516.05 L799.45 515.42 L798.52 514.82 L798.52 513.98 L799.45 513.38 L799.71 512.75 L799.48 511.67 L800.07 511.08 L801.15 511.31 L801.78 511.05 L802.38 510.12 L803.22 510.12 L803.82 511.05 L804.45 511.31 L805.53 511.08 L806.12 511.67 L805.89 512.75 L806.15 513.38 Z M801.10 514.40 a1.70 1.70 0 1 0 3.40 0 a1.70 1.70 0 1 0 -3.40 0 Z"/><path fill-rule="evenodd" fill="#333" d="M800.18 519.55 L800.18 520.25 L799.44 520.70 L799.17 521.18 L799.14 522.04 L798.53 522.39 L797.77 521.98 L797.23 521.98 L796.47 522.39 L795.86 522.04 L795.83 521.18 L795.56 520.70 L794.82 520.25 L794.82 519.55 L795.56 519.10 L795.83 518.62 L795.86 517.76 L796.47 517.41 L797.23 517.82 L797.77 517.82 L798.53 517.41 L799.14 517.76 L799.17 518.62 L799.44 519.10 Z M796.70 519.90 a0.80 0.80 0 1 0 1.60 0 a0.80 0.80 0 1 0 -1.60 0 Z"/><path fill-rule="evenodd" fill="#333" d="M807.08 540.98 L807.08 541.82 L806.15 542.42 L805.89 543.05 L806.12 544.13 L805.53 544.72 L804.45 544.49 L803.82 544.75 L803.22 545.68 L802.38 545.68 L801.78 544.75 L801.15 544.49 L800.07 544.72 L799.48 544.13 L799.71 543.05 L799.45 542.42 L798.52 541.82 L798.52 540.98 L799.45 540.38 L799.71 539.75 L799.48 538.67 L800.07 538.08 L801.15 538.31 L801.78 538.05 L802.38 537.12 L803.22 537.12 L803.82 538.05 L804.45 538.31 L805.53 538.08 L806.12 538.67 L805.89 539.75 L806.15 540.38 Z M801.10 541.40 a1.70 1.70 0 1 0 3.40 0 a1.70 1.70 0 1 0 -3.40 0 Z"/><path fill-rule="evenodd" fill="#333" d="M800.18 546.55 L800.18 547.25 L799.44 547.70 L799.17 548.18 L799.14 549.04 L798.53 549.39 L797.77 548.98 L797.23 548.98 L796.47 549.39 L795.86 549.04 L795.83 548.18 L795.56 547.70 L794.82 547.25 L794.82 546.55 L795.56 546.10 L795.83 545.62 L795.86 544.76 L796.47 544.41 L797.23 544.82 L797.77 544.82 L798.53 544.41 L799.14 544.76 L799.17 545.62 L799.44 546.10 Z M796.70 546.90 a0.80 0.80 0 1 0 1.60 0 a0.80 0.80 0 1 0 -1.60 0 Z"/><path fill-rule="evenodd" fill="#333" d="M807.08 567.98 L807.08 568.82 L806.15 569.42 L805.89 570.05 L806.12 571.13 L805.53 571.72 L804.45 571.49 L803.82 571.75 L803.22 572.68 L802.38 572.68 L801.78 571.75 L801.15 571.49 L800.07 571.72 L799.48 571.13 L799.71 570.05 L799.45 569.42 L798.52 568.82 L798.52 567.98 L799.45 567.38 L799.71 566.75 L799.48 565.67 L800.07 565.08 L801.15 565.31 L801.78 565.05 L802.38 564.12 L803.22 564.12 L803.82 565.05 L804.45 565.31 L805.53 565.08 L806.12 565.67 L805.89 566.75 L806.15 567.38 Z M801.10 568.40 a1.70 1.70 0 1 0 3.40 0 a1.70 1.70 0 1 0 -3.40 0 Z"/><path fill-rule="evenodd" fill="#333" d="M800.18 573.55 L800.18 574.25 L799.44 574.70 L799.17 575.18 L799.14 576.04 L798.53 576.39 L797.77 575.98 L797.23 575.98 L796.47 576.39 L795.86 576.04 L795.83 575.18 L795.56 574.70 L794.82 574.25 L794.82 573.55 L795.56 573.10 L795.83 572.62 L795.86 571.76 L796.47 571.41 L797.23 571.82 L797.77 571.82 L798.53 571.41 L799.14 571.76 L799.17 572.62 L799.44 573.10 Z M796.70 573.90 a0.80 0.80 0 1 0 1.60 0 a0.80 0.80 0 1 0 -1.60 0 Z"/>
<path fill="#111" d="M102 383.8 h7.4 l-3.7 4 Z"/><path fill="#d0d0d0" d="M226.3 381.9 l3.85 -3.9 l3.85 3.9 Z M226.3 383.7 l3.85 4.1 l3.85 -4.1 Z"/><path fill="#d0d0d0" d="M358.7 381.9 l3.85 -3.9 l3.85 3.9 Z M358.7 383.7 l3.85 4.1 l3.85 -4.1 Z"/><path fill="#d0d0d0" d="M549.1 381.9 l3.85 -3.9 l3.85 3.9 Z M549.1 383.7 l3.85 4.1 l3.85 -4.1 Z"/><path fill="#d0d0d0" d="M705.5 381.9 l3.85 -3.9 l3.85 3.9 Z M705.5 383.7 l3.85 4.1 l3.85 -4.1 Z"/>
</svg>
<span class="t" style="top:6.2px;font-size:17.5px;color:#fff;-webkit-text-stroke:0.35px #fff;left:26.0px;transform:scaleX(0.8656);transform-origin:0 0;"><i>Sensor</i></span>
<span class="t" style="top:6.2px;font-size:17.5px;color:#fff;-webkit-text-stroke:0.35px #fff;left:79.0px;transform:scaleX(0.9397);transform-origin:0 0;">VMware Datastore (SOAP)</span>
<span class="t" style="top:29.0px;font-size:10.5px;color:#fff;-webkit-text-stroke:0.25px #fff;left:46.1px;transform:scaleX(0.9359);transform-origin:0 0;">OK</span>
<span class="t" style="top:76.0px;font-size:13px;color:#4d4d4d;-webkit-text-stroke:0.4px #4d4d4d;left:69.4px;transform:scaleX(0.9670);transform-origin:0 0;">Overview</span>
<span class="t" style="top:76.0px;font-size:13px;color:#4d4d4d;left:191.5px;transform:scaleX(0.9577);transform-origin:0 0;">Live Data</span>
<span class="t" style="top:76.0px;font-size:13px;color:#4d4d4d;font-weight:bold;left:298.9px;transform:scaleX(1.0229);transform-origin:0 0;">2</span>
<span class="t" style="top:76.0px;font-size:13px;color:#4d4d4d;left:315.4px;transform:scaleX(0.9647);transform-origin:0 0;">days</span>
<span class="t" style="top:76.0px;font-size:13px;color:#4d4d4d;font-weight:bold;left:393.1px;transform:scaleX(0.9883);transform-origin:0 0;">30</span>
<span class="t" style="top:76.0px;font-size:13px;color:#4d4d4d;left:413.1px;transform:scaleX(0.9647);transform-origin:0 0;">days</span>
<span class="t" style="top:76.0px;font-size:13px;color:#4d4d4d;font-weight:bold;left:489.2px;transform:scaleX(1.0091);transform-origin:0 0;">365</span>
<span class="t" style="top:76.0px;font-size:13px;color:#4d4d4d;left:515.5px;transform:scaleX(0.9502);transform-origin:0 0;">days</span>
<span class="t" style="top:76.0px;font-size:13px;color:#4d4d4d;left:613.4px;transform:scaleX(1.0010);transform-origin:0 0;">Historic Data</span>
<span class="t" style="top:76.0px;font-size:13px;color:#4d4d4d;left:757.2px;transform:scaleX(0.9906);transform-origin:0 0;">Log</span>
<span class="t" style="top:76.0px;font-size:13px;color:#4d4d4d;left:847.0px;transform:scaleX(0.9812);transform-origin:0 0;">Settings</span>
<span class="t" style="top:129.0px;font-size:12px;color:#404040;left:36.7px;transform:scaleX(0.9380);transform-origin:0 0;">Free Space</span>
<span class="t" style="top:296.4px;font-size:12px;color:#404040;left:36.7px;transform:scaleX(0.8955);transform-origin:0 0;">98 %</span>
<span class="t" style="top:291.7px;font-size:11px;color:#333;left:157.9px;transform:scaleX(0.9120);transform-origin:0 0;">0 %</span>
<span class="t" style="top:291.7px;font-size:11px;color:#333;left:247.7px;transform:scaleX(0.9134);transform-origin:0 0;">100 %</span>
<span class="t" style="top:129.6px;font-size:9px;color:#333;left:312.9px;transform:scaleX(1.0550);transform-origin:0 0;">Accessible</span>
<span class="t" style="top:168.9px;font-size:9px;color:#333;left:312.9px;transform:scaleX(1.0281);transform-origin:0 0;">Yes</span>
<span class="t" style="top:129.6px;font-size:9px;color:#333;left:451.2px;transform:scaleX(1.0380);transform-origin:0 0;">Available Capacity</span>
<span class="t" style="top:168.9px;font-size:9px;color:#333;left:451.2px;transform:scaleX(1.0097);transform-origin:0 0;">1,991,791,083,520 ...</span>
<span class="t" style="top:129.6px;font-size:9px;color:#333;left:590.1px;transform:scaleX(1.0042);transform-origin:0 0;">Free Bytes</span>
<span class="t" style="top:168.9px;font-size:9px;color:#333;left:590.1px;transform:scaleX(1.0038);transform-origin:0 0;">1,952,612,089,856 ...</span>
<span class="t" style="top:129.6px;font-size:9px;color:#333;left:728.7px;transform:scaleX(1.0460);transform-origin:0 0;">Total Provisioned</span>
<span class="t" style="top:168.9px;font-size:9px;color:#333;left:728.7px;transform:scaleX(0.9775);transform-origin:0 0;">2.57 %</span>
<span class="t" style="top:195.6px;font-size:9px;color:#333;left:312.9px;transform:scaleX(1.0534);transform-origin:0 0;">Uncommitted Bytes</span>
<span class="t" style="top:234.4px;font-size:9px;color:#333;left:312.9px;transform:scaleX(1.0231);transform-origin:0 0;">12,008,292,898 Byte</span>
<span class="t" style="top:270.1px;font-size:9.5px;color:#777;left:274.9px;transform:scaleX(1.0526);transform-origin:0 0;">x</span>
<span class="t" style="top:376.9px;font-size:12px;color:#222;left:54.7px;transform:scaleX(0.9462);transform-origin:0 0;">Channel</span>
<span class="t" style="top:376.9px;font-size:12px;color:#222;left:210.5px;transform:scaleX(0.9250);transform-origin:0 0;">ID</span>
<span class="t" style="top:376.9px;font-size:12px;color:#222;left:299.5px;transform:scaleX(0.9744);transform-origin:0 0;">Last Value</span>
<span class="t" style="top:376.9px;font-size:12px;color:#222;left:495.0px;transform:scaleX(1.0150);transform-origin:0 0;">Minimum</span>
<span class="t" style="top:376.9px;font-size:12px;color:#222;left:648.5px;transform:scaleX(0.9920);transform-origin:0 0;">Maximum</span>
<span class="t" style="top:403.8px;font-size:12px;color:#484848;left:54.7px;transform:scaleX(0.9902);transform-origin:0 0;">Accessible</span>
<span class="t" style="top:403.8px;font-size:12px;color:#484848;left:210.5px;transform:scaleX(0.9625);transform-origin:0 0;">7</span>
<span class="t" style="top:403.8px;font-size:12px;color:#484848;left:324.4px;transform:scaleX(1.0113);transform-origin:50% 0;">Yes</span>
<span class="t" style="top:403.8px;font-size:12px;color:#484848;left:539.3px;transform:scaleX(1.0113);transform-origin:100% 0;">Yes</span>
<span class="t" style="top:403.8px;font-size:12px;color:#484848;left:695.4px;transform:scaleX(1.0113);transform-origin:100% 0;">Yes</span>
<span class="t" style="top:430.8px;font-size:12px;color:#484848;left:54.7px;transform:scaleX(0.9684);transform-origin:0 0;">Available Capacity</span>
<span class="t" style="top:430.8px;font-size:12px;color:#484848;left:210.5px;transform:scaleX(0.9625);transform-origin:0 0;">6</span>
<span class="t" style="top:430.8px;font-size:12px;color:#484848;left:270.5px;transform:scaleX(0.9447);transform-origin:50% 0;">1,991,791,083,520 Byte</span>
<span class="t" style="top:430.8px;font-size:12px;color:#484848;left:431.4px;transform:scaleX(0.9447);transform-origin:100% 0;">1,991,791,083,520 Byte</span>
<span class="t" style="top:430.8px;font-size:12px;color:#484848;left:587.5px;transform:scaleX(0.9447);transform-origin:100% 0;">1,991,791,083,520 Byte</span>
<span class="t" style="top:457.8px;font-size:12px;color:#484848;left:54.7px;transform:scaleX(0.9895);transform-origin:0 0;">Downtime</span>
<span class="t" style="top:457.8px;font-size:12px;color:#484848;left:210.5px;transform:scaleX(0.9625);transform-origin:0 0;">-4</span>
<span class="t" style="top:484.8px;font-size:12px;color:#484848;left:54.7px;transform:scaleX(0.9357);transform-origin:0 0;">Free Bytes</span>
<span class="t" style="top:484.8px;font-size:12px;color:#484848;left:210.5px;transform:scaleX(0.9625);transform-origin:0 0;">3</span>
<span class="t" style="top:484.8px;font-size:12px;color:#484848;left:270.5px;transform:scaleX(0.9447);transform-origin:50% 0;">1,952,612,089,856 Byte</span>
<span class="t" style="top:484.8px;font-size:12px;color:#484848;left:431.4px;transform:scaleX(0.9447);transform-origin:100% 0;">1,952,612,089,856 Byte</span>
<span class="t" style="top:484.8px;font-size:12px;color:#484848;left:587.5px;transform:scaleX(0.9447);transform-origin:100% 0;">1,952,613,138,432 Byte</span>
<span class="t" style="top:511.8px;font-size:12px;color:#484848;left:54.7px;transform:scaleX(0.9316);transform-origin:0 0;">Free Space</span>
<span class="t" style="top:511.8px;font-size:12px;color:#484848;left:210.5px;transform:scaleX(0.9625);transform-origin:0 0;">2</span>
<span class="t" style="top:511.8px;font-size:12px;color:#484848;left:320.5px;transform:scaleX(0.9211);transform-origin:50% 0;">98 %</span>
<span class="t" style="top:511.8px;font-size:12px;color:#484848;left:531.5px;transform:scaleX(0.9211);transform-origin:100% 0;">98 %</span>
<span class="t" style="top:511.8px;font-size:12px;color:#484848;left:687.6px;transform:scaleX(0.9211);transform-origin:100% 0;">98 %</span>
<span class="t" style="top:538.8px;font-size:12px;color:#484848;left:54.7px;transform:scaleX(0.9892);transform-origin:0 0;">Total Provisioned</span>
<span class="t" style="top:538.8px;font-size:12px;color:#484848;left:210.5px;transform:scaleX(0.9625);transform-origin:0 0;">4</span>
<span class="t" style="top:538.8px;font-size:12px;color:#484848;left:315.5px;transform:scaleX(0.9288);transform-origin:50% 0;">2.57 %</span>
<span class="t" style="top:538.8px;font-size:12px;color:#484848;left:521.5px;transform:scaleX(0.9288);transform-origin:100% 0;">2.57 %</span>
<span class="t" style="top:538.8px;font-size:12px;color:#484848;left:677.6px;transform:scaleX(0.9288);transform-origin:100% 0;">2.57 %</span>
<span class="t" style="top:565.8px;font-size:12px;color:#484848;left:54.7px;transform:scaleX(0.9842);transform-origin:0 0;">Uncommitted Bytes</span>
<span class="t" style="top:565.8px;font-size:12px;color:#484848;left:210.5px;transform:scaleX(0.9625);transform-origin:0 0;">5</span>
<span class="t" style="top:565.8px;font-size:12px;color:#484848;left:278.8px;transform:scaleX(0.9479);transform-origin:50% 0;">12,008,292,898 Byte</span>
<span class="t" style="top:565.8px;font-size:12px;color:#484848;left:448.1px;transform:scaleX(0.9479);transform-origin:100% 0;">12,008,292,898 Byte</span>
<span class="t" style="top:565.8px;font-size:12px;color:#484848;left:604.2px;transform:scaleX(0.9479);transform-origin:100% 0;">12,008,292,898 Byte</span>
</body></html>
